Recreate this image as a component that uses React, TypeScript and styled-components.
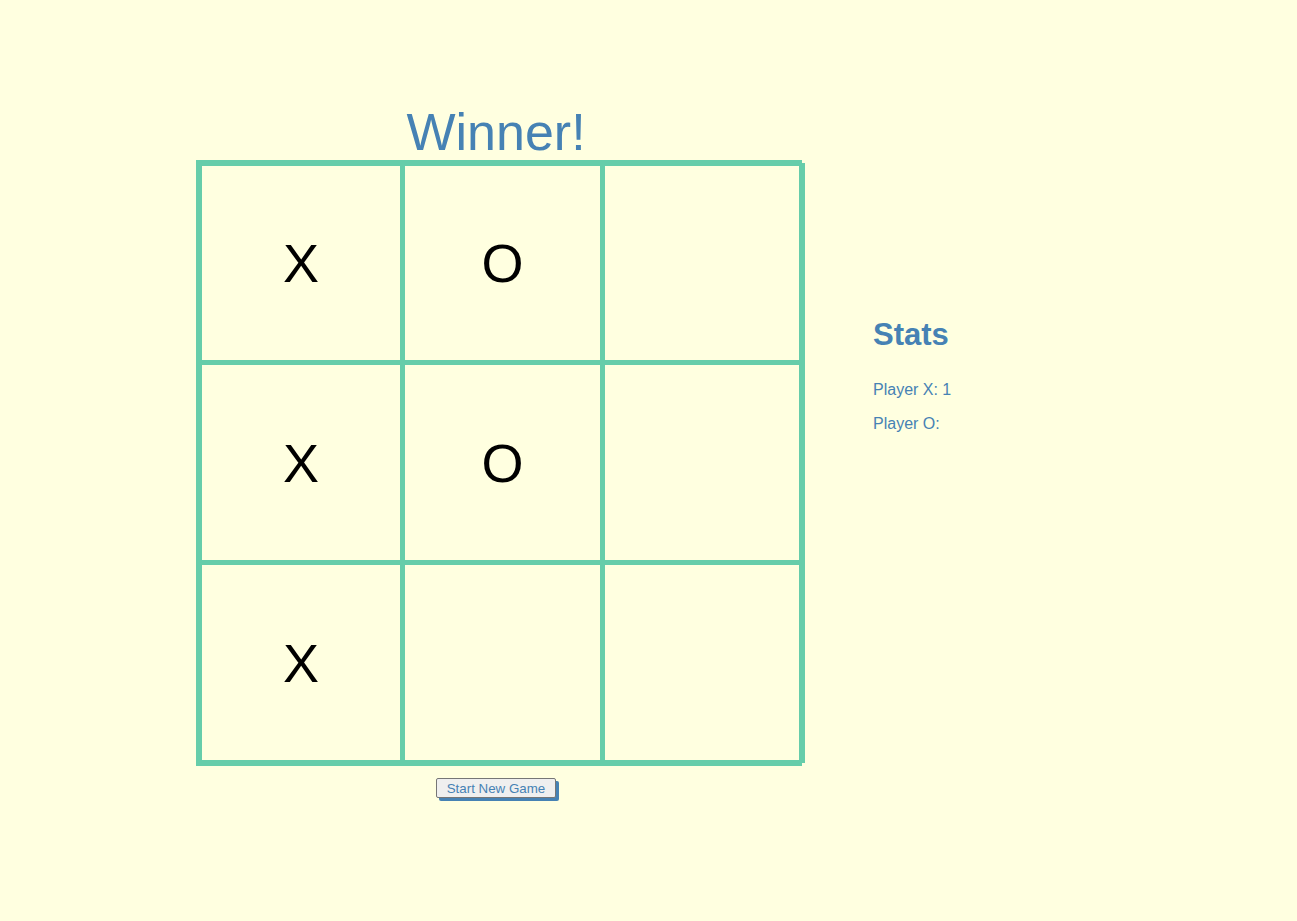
import { createGlobalStyle } from "styled-components";
import styled from "styled-components";

const GlobalStyle = createGlobalStyle`
  html, body {
    margin: 0;
    padding: 0;
    background: #ffffe0;
    font-family: "Liberation Sans", Arial, sans-serif;
  }
  body {
    min-height: 921px;
  }
`;

const Page = styled.div`
  display: flex;
  align-items: flex-start;
  gap: 77px;
  padding: 104px 0 0 196px;
`;

const GameColumn = styled.div`
  width: 600px;
  display: flex;
  flex-direction: column;
  align-items: center;
`;

const Title = styled.h1`
  margin: 0;
  font-size: 52px;
  line-height: 56px;
  font-weight: normal;
  color: #4682b4;
`;

const Board = styled.div`
  align-self: flex-start;
  display: grid;
  grid-template-columns: 198px 195px 194px;
  grid-template-rows: 194px 195px 195px;
  gap: 5px;
  padding: 6px 3px 6px 6px;
  background: #66cdaa;
  box-shadow: 6px 0 0 -3px #66cdaa;
`;

const Cell = styled.div`
  display: flex;
  align-items: center;
  justify-content: center;
  background: #ffffe0;
  font-size: 54px;
  color: #000;
  cursor: pointer;
`;

const NewGameButton = styled.button`
  margin-top: 12px;
  height: 20px;
  padding: 1px 10px;
  font-family: "Liberation Sans", Arial, sans-serif;
  font-size: 13.33px;
  color: #4682b4;
  background: #efefef;
  border: 1px solid #767676;
  border-radius: 2px;
  box-shadow: 3px 3px 0 #4682b4;
`;

const Stats = styled.div`
  margin-top: 216px;
  color: #4682b4;
`;

const StatsTitle = styled.h2`
  margin: 0 0 31px;
  font-size: 31px;
  line-height: 30px;
  font-weight: bold;
`;

const StatLine = styled.p`
  margin: 0 0 16px;
  font-size: 16px;
  line-height: 18px;
`;

const squares = ["X", "O", "", "X", "O", "", "X", "", ""];

export default function App() {
  return (
    <>
      <GlobalStyle />
      <Page>
        <GameColumn>
          <Title>Winner!</Title>
          <Board>
            {squares.map((value, i) => (
              <Cell key={i}>{value}</Cell>
            ))}
          </Board>
          <NewGameButton>Start New Game</NewGameButton>
        </GameColumn>
        <Stats>
          <StatsTitle>Stats</StatsTitle>
          <StatLine>Player X: 1</StatLine>
          <StatLine>Player O:</StatLine>
        </Stats>
      </Page>
    </>
  );
}
